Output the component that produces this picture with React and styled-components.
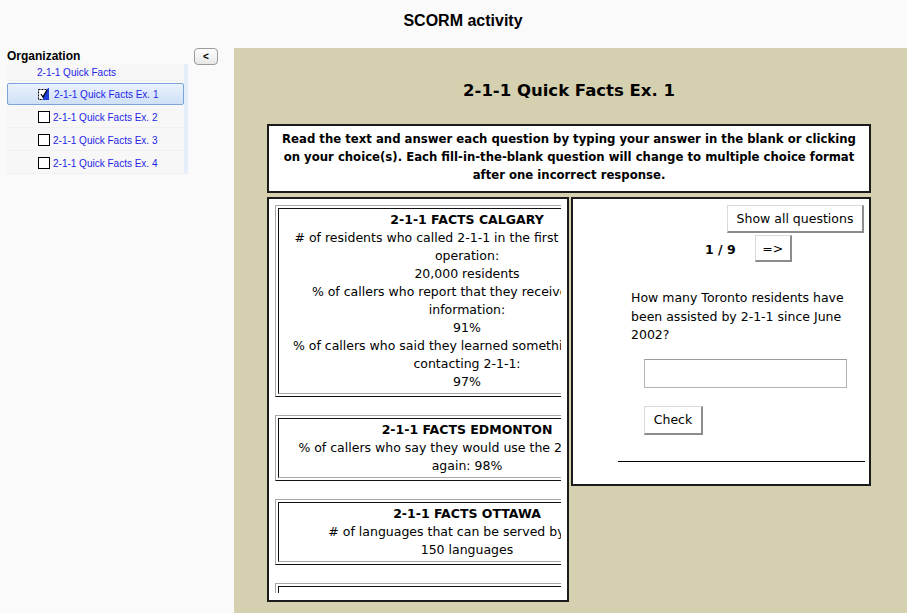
import React from 'react';
import styled, { createGlobalStyle } from 'styled-components';

const GlobalStyle = createGlobalStyle`
  html, body {
    margin: 0;
    padding: 0;
    background: #fafafa;
  }
  * {
    box-sizing: border-box;
  }
`;

const Page = styled.div`
  width: 907px;
  height: 613px;
  overflow: hidden;
  display: flex;
  flex-direction: column;
  font-family: 'DejaVu Sans', sans-serif;
  color: #000;
`;

const Header = styled.h1`
  margin: 0;
  height: 48px;
  padding: 0 0 6px 19px;
  display: flex;
  align-items: center;
  justify-content: center;
  font: bold 16px 'Liberation Sans', Arial, sans-serif;
`;

const Body = styled.div`
  flex: 1;
  display: flex;
  min-height: 0;
`;

const Sidebar = styled.aside`
  width: 234px;
  flex-shrink: 0;
  padding-left: 7px;
  display: grid;
  grid-template-columns: 181px 24px;
  column-gap: 6px;
  align-items: start;
  font-family: 'Liberation Sans', Arial, sans-serif;
`;

const OrgTitle = styled.div`
  font-weight: bold;
  font-size: 12px;
  line-height: 16px;
`;

const Tree = styled.div`
  display: flex;
  background: #f7f7f7;
`;

const TreeList = styled.ul`
  list-style: none;
  margin: 0;
  padding: 0;
  flex: 1;
`;

const TreeRow = styled.li`
  height: ${({ $h }) => $h || 23}px;
  display: flex;
  align-items: center;
  gap: 3px;
  padding-left: ${({ $indent }) => $indent}px;
  padding-top: ${({ $top }) => $top || 0}px;
  font-size: 10px;
  color: #2424e6;
  border-bottom: 1px solid #f1f1f1;
  ${({ $active }) =>
    $active &&
    `
    margin-top: 2px;
    border: 1px solid #7ea3d6;
    border-radius: 2px;
    background: linear-gradient(#eaf2fd, #cfe0f6);
    padding-left: 30px;
  `}
`;

const Box = styled.span`
  width: 12px;
  height: 12px;
  border: 1px solid #000;
  background: #fff;
  flex-shrink: 0;
`;

const Resizer = styled.div`
  width: 4px;
  background: #e6eefa;
  display: flex;
  flex-direction: column;
  padding-top: 41px;
`;

const Grip = styled.span`
  height: 9px;
  width: 3px;
  background-image: radial-gradient(#888 40%, transparent 45%);
  background-size: 2px 2px;
`;

const CollapseBtn = styled.button`
  width: 24px;
  height: 17px;
  padding: 0;
  border: 1px solid #9a9a9a;
  border-radius: 4px;
  background: linear-gradient(#ffffff, #e6e6e6);
  font: bold 10px 'Liberation Sans', Arial, sans-serif;
  line-height: 14px;
  color: #000;
`;

const Main = styled.main`
  flex: 1;
  background: #d5d0af;
  padding: 31px 36px 0 33px;
  display: flex;
  flex-direction: column;
`;

const Title = styled.h2`
  margin: 0;
  text-align: center;
  font-size: 16.5px;
  line-height: 24px;
  font-weight: bold;
`;

const Instructions = styled.div`
  margin-top: 21px;
  background: #fff;
  border: 2px solid #1b1b1b;
  padding: 4px 0 7px;
  text-align: center;
  font-weight: bold;
  font-size: 11.7px;
  line-height: 18px;
  white-space: nowrap;
`;

const Columns = styled.div`
  margin-top: 4px;
  display: grid;
  grid-template-columns: 302px 300px;
  column-gap: 2px;
  align-items: start;
`;

const Panel = styled.section`
  background: #fff;
  border: 2px solid #1b1b1b;
`;

const FactsPanel = styled(Panel)`
  padding: 6px 6px 7px 6px;
`;

const FactsScroll = styled.div`
  height: 388px;
  overflow: hidden;
`;

const FactTable = styled.div`
  width: 384px;
  margin-bottom: 18px;
  padding: 2px;
  border: 1px solid;
  border-color: #a8a8a8 #111 #111 #a8a8a8;
`;

const FactCell = styled.div`
  border: 1px solid;
  border-color: #111 #a8a8a8 #a8a8a8 #111;
  padding: 2px 0;
  text-align: center;
  font-size: 12.5px;
  line-height: 18px;
  white-space: nowrap;
`;

const FactHead = styled.div`
  font-weight: bold;
`;

const QuestionPanel = styled(Panel)`
  padding: 6px 5px 22px 0;
  display: flex;
  flex-direction: column;
  font-size: 12.5px;
`;

const Button = styled.button`
  background: #fff;
  border-style: solid;
  border-width: 1px 2px 2px 1px;
  border-color: #dadada #8c8c8c #8c8c8c #dadada;
  font: 12.5px 'DejaVu Sans', sans-serif;
  color: #000;
  padding: 0;
  width: ${({ $w }) => $w}px;
  height: ${({ $h }) => $h}px;
  flex-shrink: 0;
`;

const TopBar = styled.div`
  display: flex;
  justify-content: flex-end;
`;

const Pager = styled.div`
  margin-top: 2px;
  padding-left: 132px;
  display: flex;
  align-items: center;
  gap: 19px;
`;

const Count = styled.span`
  font-weight: bold;
  font-size: 12.5px;
  padding-top: 2px;
`;

const Question = styled.p`
  margin: 27px 0 0 58px;
  width: 228px;
  line-height: 18.5px;
`;

const Answer = styled.input`
  margin: 14px 0 0 71px;
  width: 203px;
  height: 29px;
  border: 1px solid #b4b4b4;
  border-top-color: #9a9a9a;
  background: #fff;
`;

const CheckRow = styled.div`
  margin: 18px 0 0 71px;
`;

const Rule = styled.hr`
  margin: 26px 0 0 45px;
  width: 247px;
  border: 0;
  border-top: 1px solid #000;
`;

const CurrentIcon = () => (
  <svg width="13" height="13" viewBox="0 0 13 13">
    <rect x="0.5" y="1.5" width="10" height="10" fill="#fff" stroke="#000" strokeDasharray="2 1" />
    <polygon points="10,0 11,0 11,12 5,12 5,8" fill="#1d3fd6" />
    <path d="M3 6 L5 9 L9 2" stroke="#000" strokeWidth="1.2" fill="none" />
  </svg>
);

const items = [
  { label: '2-1-1 Quick Facts Ex. 2' },
  { label: '2-1-1 Quick Facts Ex. 3' },
  { label: '2-1-1 Quick Facts Ex. 4' },
];

const facts = [
  {
    head: '2-1-1 FACTS CALGARY',
    lines: [
      '# of residents who called 2-1-1 in the first two years of',
      'operation:',
      '20,000 residents',
      '% of callers who report that they received helpful',
      'information:',
      '91%',
      '% of callers who said they learned something new from',
      'contacting 2-1-1:',
      '97%',
    ],
  },
  {
    head: '2-1-1 FACTS EDMONTON',
    lines: ['% of callers who say they would use the 2-1-1 service', 'again: 98%'],
  },
  {
    head: '2-1-1 FACTS OTTAWA',
    lines: ['# of languages that can be served by 2-1-1:', '150 languages'],
  },
  {
    head: '2-1-1 FACTS QUEBEC CITY',
    lines: ['# of calls answered in the first year:', '30,000 calls'],
  },
];

const App = () => (
  <Page>
    <GlobalStyle />
    <Header>SCORM activity</Header>
    <Body>
      <Sidebar>
        <div>
          <OrgTitle>Organization</OrgTitle>
          <Tree>
            <TreeList>
              <TreeRow $indent={30} $h={17}>
                2-1-1 Quick Facts
              </TreeRow>
              <TreeRow $active $h={22}>
                <CurrentIcon />
                2-1-1 Quick Facts Ex. 1
              </TreeRow>
              {items.map(({ label }) => (
                <TreeRow key={label} $indent={31} $top={2}>
                  <Box />
                  {label}
                </TreeRow>
              ))}
            </TreeList>
            <Resizer>
              <Grip />
            </Resizer>
          </Tree>
        </div>
        <CollapseBtn>&lt;</CollapseBtn>
      </Sidebar>
      <Main>
        <Title>2-1-1 Quick Facts Ex. 1</Title>
        <Instructions>
          Read the text and answer each question by typing your answer in the blank or clicking
          <br />
          on your choice(s). Each fill-in-the-blank question will change to multiple choice format
          <br />
          after one incorrect response.
        </Instructions>
        <Columns>
          <FactsPanel>
            <FactsScroll>
              {facts.map(({ head, lines }) => (
                <FactTable key={head}>
                  <FactCell>
                    <FactHead>{head}</FactHead>
                    {lines.map((l, i) => (
                      <div key={i}>{l}</div>
                    ))}
                  </FactCell>
                </FactTable>
              ))}
            </FactsScroll>
          </FactsPanel>
          <QuestionPanel>
            <TopBar>
              <Button $w={137} $h={28}>
                Show all questions
              </Button>
            </TopBar>
            <Pager>
              <Count>1 / 9</Count>
              <Button $w={37} $h={27}>
                =&gt;
              </Button>
            </Pager>
            <Question>How many Toronto residents have been assisted by 2-1-1 since June 2002?</Question>
            <Answer type="text" />
            <CheckRow>
              <Button $w={59} $h={29}>
                Check
              </Button>
            </CheckRow>
            <Rule />
          </QuestionPanel>
        </Columns>
      </Main>
    </Body>
  </Page>
);

export default App;
